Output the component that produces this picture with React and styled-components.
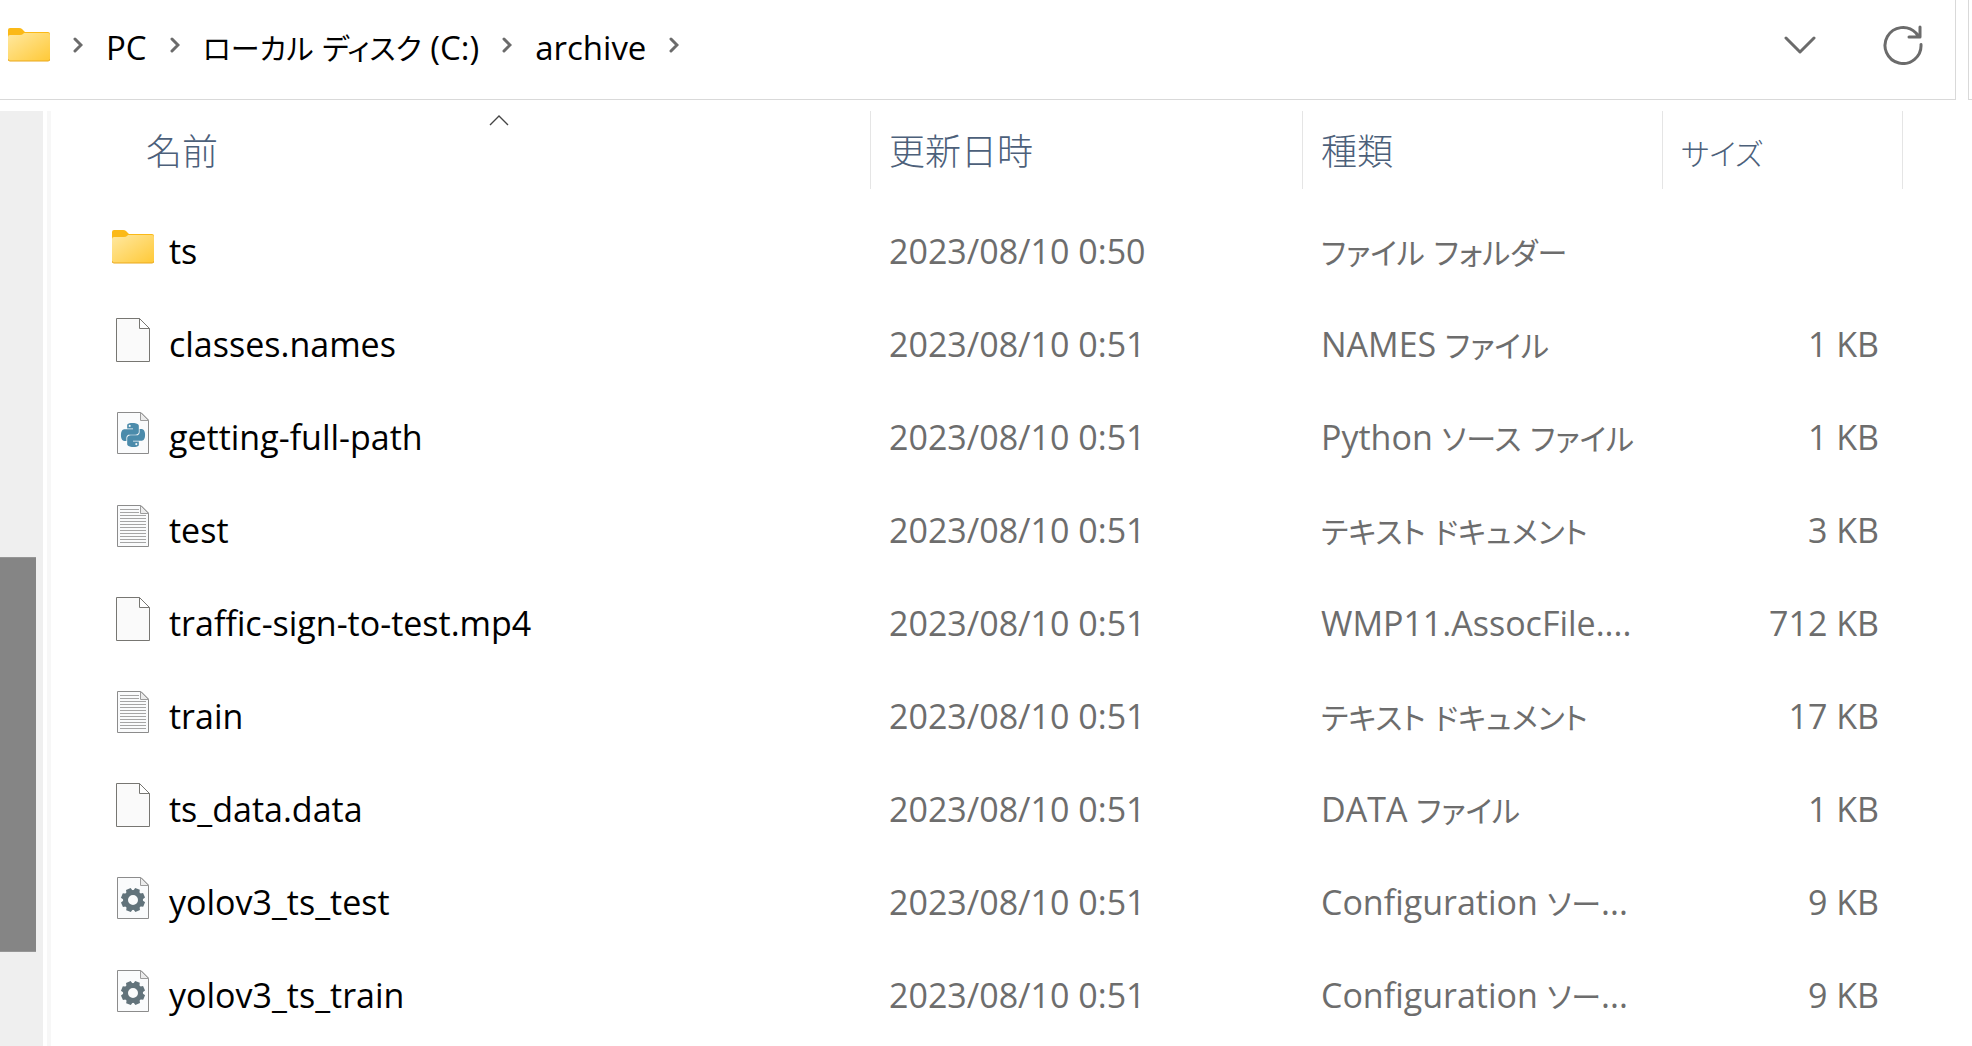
import React, { useState } from "react";
import styled, { createGlobalStyle } from "styled-components";

const files = [
  { name: "ts", icon: "folder", date: "2023/08/10 0:50", type: "ファイル フォルダー", size: "" },
  { name: "classes.names", icon: "blank", date: "2023/08/10 0:51", type: "NAMES ファイル", size: "1 KB" },
  { name: "getting-full-path", icon: "python", date: "2023/08/10 0:51", type: "Python ソース ファイル", size: "1 KB" },
  { name: "test", icon: "text", date: "2023/08/10 0:51", type: "テキスト ドキュメント", size: "3 KB" },
  { name: "traffic-sign-to-test.mp4", icon: "blank", date: "2023/08/10 0:51", type: "WMP11.AssocFile....", size: "712 KB" },
  { name: "train", icon: "text", date: "2023/08/10 0:51", type: "テキスト ドキュメント", size: "17 KB" },
  { name: "ts_data.data", icon: "blank", date: "2023/08/10 0:51", type: "DATA ファイル", size: "1 KB" },
  { name: "yolov3_ts_test", icon: "config", date: "2023/08/10 0:51", type: "Configuration ソー...", size: "9 KB" },
  { name: "yolov3_ts_train", icon: "config", date: "2023/08/10 0:51", type: "Configuration ソー...", size: "9 KB" },
];

const crumbs = ["PC", "ローカル ディスク (C:)", "archive"];

const FolderIcon = () => (
  <svg width="42" height="34" viewBox="0 0 42 34" aria-hidden="true">
    <defs>
      <linearGradient id="folder" x1="0" y1="0" x2="1" y2="1">
        <stop offset="0" stopColor="#ffe8a0" />
        <stop offset="1" stopColor="#ffc937" />
      </linearGradient>
    </defs>
    <path d="M0 2Q0 0 2 0H11Q13 0 14 1L17 4H40Q42 4 42 6V14H0Z" fill="#fbb917" />
    <path d="M0 9Q0 7 2 7H12Q14 7 15 6L16 5H40Q42 5 42 7V31Q42 33 40 33H2Q0 33 0 31Z" fill="url(#folder)" />
    <path d="M0 31Q0 33 2 33H40Q42 33 42 31" fill="none" stroke="#eaa81c" />
  </svg>
);

const BlankIcon = () => (
  <svg width="34" height="44" viewBox="0 0 34 44" aria-hidden="true">
    <path d="M0.5 0.5H23.5L33.5 10.5V43.5H0.5Z" fill="#fafafa" stroke="#777672" />
    <path d="M23.5 0.5V10.5H33.5Z" fill="#fff" stroke="#777672" />
  </svg>
);

const Sheet = ({ children }) => (
  <svg width="32" height="42" viewBox="0 0 32 42" aria-hidden="true">
    <path d="M0.5 0.5H24L31.5 8V41.5H0.5Z" fill="#fafbfc" stroke="#8c8c8c" />
    {children}
    <path d="M23.5 0.5V8.5H31.5Z" fill="#ececec" stroke="#9c9c9c" />
  </svg>
);

const TextIcon = () => (
  <Sheet>
    <path d="M3 4.5H22M3 7.5H22" stroke="#a5a5a5" />
    <path
      d="M3 10.5H29M3 13.5H29M3 16.5H29M3 19.5H29M3 22.5H29M3 25.5H29M3 28.5H29M3 31.5H29M3 34.5H29M3 37.5H29"
      stroke="#a5a5a5"
    />
  </Sheet>
);

// one snake; the logo is this shape twice, the second turned by half
const snake =
  "M14.25.18l.9.2.73.26.59.3.45.32.34.34.25.34.16.33.1.3.04.26.02.2-.01.13V8.5l-.05.63-.13.55-.21.46-.26.38-.3.31-.33.25-.35.19-.35.14-.33.1-.3.07-.26.04-.21.02H8.77l-.69.05-.59.14-.5.22-.41.27-.33.32-.27.35-.2.36-.15.37-.1.35-.07.32-.04.27-.02.21v3.06H3.17l-.21-.03-.28-.07-.32-.12-.35-.18-.36-.26-.36-.36-.35-.46-.32-.59-.28-.73-.21-.88-.14-1.05-.05-1.23.06-1.22.16-1.04.24-.87.32-.71.36-.57.4-.44.42-.33.42-.24.4-.16.36-.1.32-.05.24-.01h.16l.06.01h8.16v-.83H6.18l-.01-2.75-.02-.37.05-.34.11-.31.17-.28.25-.26.31-.23.38-.2.44-.18.51-.15.58-.12.64-.1.71-.06.77-.04.84-.02 1.27.05zm-6.3 1.98l-.23.33-.08.41.08.41.23.34.33.22.41.09.41-.09.33-.22.23-.34.08-.41-.08-.41-.23-.33-.33-.22-.41-.09-.41.09z";

const PythonIcon = () => (
  <Sheet>
    <g transform="translate(4 11)" fill="#4b8bab" fillRule="evenodd">
      <path d={snake} />
      <path d={snake} transform="rotate(180 12 12)" />
    </g>
  </Sheet>
);

const ConfigIcon = () => (
  <Sheet>
    <g fill="#62737b">
      {[22, 67, 112, 157, 202, 247, 292, 337].map((angle) => (
        <path key={angle} d="M12.5 15L13.5 11H18.5L19.5 15Z" transform={`rotate(${angle} 16 23)`} />
      ))}
    </g>
    <circle cx="16" cy="23" r="7.5" fill="none" stroke="#62737b" strokeWidth="5" />
  </Sheet>
);

const icons = {
  folder: FolderIcon,
  blank: BlankIcon,
  python: PythonIcon,
  text: TextIcon,
  config: ConfigIcon,
};

const CrumbArrow = () => (
  <svg width="10" height="16" viewBox="0 0 10 16" aria-hidden="true">
    <path d="M2 2L8 8L2 14" fill="none" stroke="#6b6b6b" strokeWidth="3" strokeLinecap="round" />
  </svg>
);

// katakana is set a size smaller than the text around it
const Label = ({ text }) =>
  text
    .split(/([\u30a0-\u30ff]+)/)
    .map((part, i) => (i % 2 ? <Kana key={i}>{part}</Kana> : part));

const App = () => {
  const [ascending, setAscending] = useState(true);
  const rows = ascending ? files : [...files].reverse();

  return (
    <Window>
      <GlobalStyle />
      <TopBar>
        <AddressBar>
          <Breadcrumb aria-label="パス">
            <FolderIcon />
            <CrumbArrow />
            {crumbs.map((crumb) => (
              <React.Fragment key={crumb}>
                <Crumb href="#">
                  <Label text={crumb} />
                </Crumb>
                <CrumbArrow />
              </React.Fragment>
            ))}
          </Breadcrumb>
          <IconButton type="button" aria-label="履歴">
            <svg width="32" height="18" viewBox="0 0 32 18">
              <path d="M2 2L16 16L30 2" />
            </svg>
          </IconButton>
          <IconButton type="button" aria-label="最新の情報に更新">
            <svg width="40" height="40" viewBox="0 0 40 40">
              <path d="M38 19.5A18 18 0 1 1 33 8L36 12M37 2V12H26" />
            </svg>
          </IconButton>
        </AddressBar>
        <SearchEdge />
      </TopBar>

      <Body>
        <ScrollTrack>
          <ScrollThumb />
        </ScrollTrack>
        <Panel>
          <FileTable>
            <colgroup>
              <col />
              <Col $width={432} />
              <Col $width={360} />
              <Col $width={240} />
              <Col $width={69} />
            </colgroup>
            <thead>
              <tr>
                <HeadCell aria-sort={ascending ? "ascending" : "descending"}>
                  <NameHead type="button" onClick={() => setAscending(!ascending)}>
                    名前
                    <SortMark $flip={!ascending} width="20" height="11" viewBox="0 0 20 11">
                      <path d="M1 10L10 1L19 10" fill="none" stroke="#444" strokeWidth="1.4" />
                    </SortMark>
                  </NameHead>
                </HeadCell>
                <HeadCell>
                  <HeadButton type="button">更新日時</HeadButton>
                </HeadCell>
                <HeadCell>
                  <HeadButton type="button">種類</HeadButton>
                </HeadCell>
                <HeadCell>
                  <HeadButton type="button">
                    <Label text="サイズ" />
                  </HeadButton>
                </HeadCell>
                <td />
              </tr>
            </thead>
            <tbody>
              {rows.map((file) => {
                const Icon = icons[file.icon];
                return (
                  <tr key={file.name}>
                    <Cell>
                      <FileName>
                        <IconSlot>
                          <Icon />
                        </IconSlot>
                        {file.name}
                      </FileName>
                    </Cell>
                    <Cell>{file.date}</Cell>
                    <Cell>
                      <Label text={file.type} />
                    </Cell>
                    <Cell $right>{file.size}</Cell>
                    <td />
                  </tr>
                );
              })}
            </tbody>
          </FileTable>
        </Panel>
      </Body>
    </Window>
  );
};

const GlobalStyle = createGlobalStyle`
  * {
    box-sizing: border-box;
  }
  body {
    margin: 0;
    background: #fff;
    color: #000;
    font-family: "Open Sans", "Noto Sans CJK JP", sans-serif;
    font-size: 34px;
    line-height: 48px;
    font-feature-settings: "palt";
  }
  button {
    font: inherit;
    font-feature-settings: inherit;
    background: none;
    border: 0;
    padding: 0;
    cursor: pointer;
  }
`;

const Window = styled.div`
  display: flex;
  flex-direction: column;
  min-height: 100vh;
`;

const TopBar = styled.header`
  display: flex;
  gap: 12px;
`;

const AddressBar = styled.div`
  display: flex;
  flex: 1;
  align-items: center;
  gap: 67px;
  height: 100px;
  padding: 0 32px 10px 8px;
  border: solid #d9d9d9;
  border-width: 0 1px 1px 0;
`;

const SearchEdge = styled.div`
  width: 4px;
  border: solid #d9d9d9;
  border-width: 0 0 1px 1px;
`;

const Breadcrumb = styled.nav`
  display: flex;
  flex: 1;
  align-items: center;
  gap: 23px;
`;

const Kana = styled.span`
  font-size: 30px;
  line-height: 1;
`;

const Crumb = styled.a`
  color: inherit;
  padding-top: 6px;
  font-size: 33px;
  text-decoration: none;
  white-space: nowrap;

  ${Kana} {
    font-size: 29px;
  }
`;

const IconButton = styled.button`
  display: flex;

  path {
    fill: none;
    stroke: #6b6b6b;
    stroke-width: 3;
    stroke-linecap: round;
    stroke-linejoin: round;
  }
`;

const Body = styled.main`
  display: flex;
  flex: 1;
  gap: 4px;
  padding-top: 11px;
`;

const ScrollTrack = styled.div`
  display: grid;
  grid-template-rows: 446fr 395fr 94fr;
  width: 43px;
  background: #efefef;
`;

const ScrollThumb = styled.div`
  grid-row: 2;
  width: 36px;
  background: #858585;
  border: solid #969696;
  border-width: 1px 0;
`;

const Panel = styled.section`
  flex: 1;
  border-left: 4px solid #f7f7f7;
`;

const FileTable = styled.table`
  width: 100%;
  table-layout: fixed;
  border-collapse: collapse;
`;

const Col = styled.col`
  width: ${({ $width }) => $width}px;
`;

const HeadCell = styled.th`
  padding: 0 0 15px;
  font-weight: 300;
`;

const HeadButton = styled.button`
  display: block;
  width: 100%;
  height: 78px;
  padding: 4px 18px 0;
  border-right: 1px solid #e5e5e5;
  color: #4c607a;
  font-size: 36px;
  text-align: left;
`;

const NameHead = styled(HeadButton)`
  position: relative;
  padding-left: 95px;
`;

const SortMark = styled.svg`
  position: absolute;
  top: 4px;
  left: calc(50% + 28px);
  transform: ${({ $flip }) => ($flip ? "rotate(180deg)" : "none")};
`;

const Cell = styled.td`
  height: 93px;
  padding: 0 ${({ $right }) => ($right ? 24 : 0)}px 0 18px;
  color: #6d6d6d;
  text-align: ${({ $right }) => ($right ? "right" : "left")};
  white-space: nowrap;
`;

const FileName = styled.div`
  display: flex;
  align-items: center;
  gap: 15px;
  padding-left: 43px;
  color: #000;
`;

const IconSlot = styled.span`
  display: flex;
  justify-content: center;
  width: 42px;
  padding-bottom: 8px;
`;

export default App;
